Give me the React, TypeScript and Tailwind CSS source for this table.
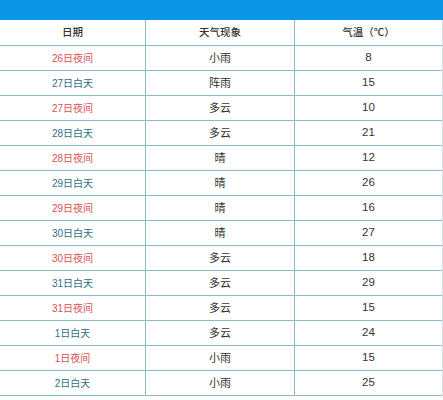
import React from "react";

// Weather forecast table: date / phenomenon / temperature.
type Row = { date: string; night: boolean; weather: string; temp: number };

const rows: Row[] = [
  { date: "26日夜间", night: true, weather: "小雨", temp: 8 },
  { date: "27日白天", night: false, weather: "阵雨", temp: 15 },
  { date: "27日夜间", night: true, weather: "多云", temp: 10 },
  { date: "28日白天", night: false, weather: "多云", temp: 21 },
  { date: "28日夜间", night: true, weather: "晴", temp: 12 },
  { date: "29日白天", night: false, weather: "晴", temp: 26 },
  { date: "29日夜间", night: true, weather: "晴", temp: 16 },
  { date: "30日白天", night: false, weather: "晴", temp: 27 },
  { date: "30日夜间", night: true, weather: "多云", temp: 18 },
  { date: "31日白天", night: false, weather: "多云", temp: 29 },
  { date: "31日夜间", night: true, weather: "多云", temp: 15 },
  { date: "1日白天", night: false, weather: "多云", temp: 24 },
  { date: "1日夜间", night: true, weather: "小雨", temp: 15 },
  { date: "2日白天", night: false, weather: "小雨", temp: 25 },
];

const cell = "flex items-center justify-center border-b border-[#8dbac6]";

export default function App() {
  return (
    <div
      className="w-[443px] h-[400px] overflow-hidden bg-white"
      style={{ fontFamily: '"Liberation Sans", "Noto Sans CJK SC", sans-serif' }}
    >
      <div className="h-[20px] bg-[#0a95e6]" />
      <div className="grid grid-cols-[146px_149px_147px] border-r border-[#d4dde0] w-[443px]">
        <div className={`${cell} h-[26px] border-r text-[10.5px] text-[#333] font-medium`}>日期</div>
        <div className={`${cell} h-[26px] border-r text-[10.5px] text-[#333] font-medium`}>天气现象</div>
        <div className={`${cell} h-[26px] text-[10.5px] text-[#333] font-medium`}>气温（℃）</div>
        {rows.map((r) => (
          <React.Fragment key={r.date}>
            <div
              className={`${cell} h-[25px] border-r text-[10px] ${r.night ? "text-[#d9504f]" : "text-[#2f6f87]"}`}
            >
              {r.date}
            </div>
            <div className={`${cell} h-[25px] border-r text-[11px] text-[#333]`}>{r.weather}</div>
            <div className={`${cell} h-[25px] text-[11.5px] text-[#333]`}>{r.temp}</div>
          </React.Fragment>
        ))}
      </div>
    </div>
  );
}
